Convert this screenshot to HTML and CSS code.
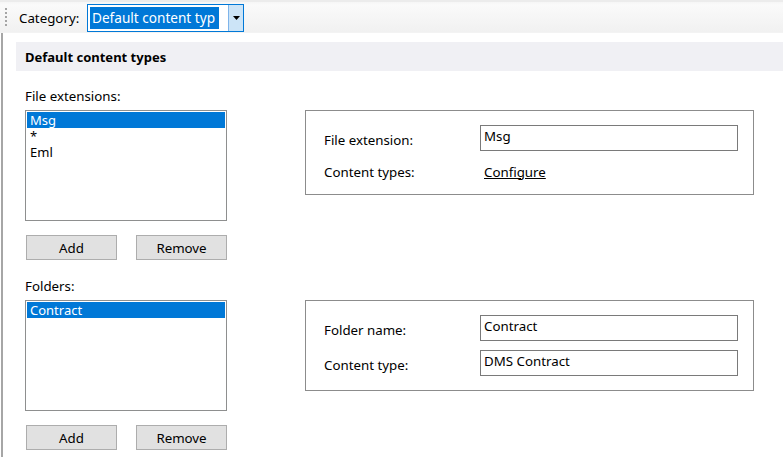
FILE: index.html
```html
<!DOCTYPE html>
<html>
<head>
<meta charset="utf-8">
<link rel="stylesheet" href="styles.css">
</head>
<body>
<div class="app">
  <div class="toolbar">
    <span class="grip"></span>
    <span class="cat-label">Category:</span>
    <div class="combo">
      <span class="combo-text"><span class="combo-sel">Default content typ</span></span>
      <span class="combo-btn"><svg width="7" height="4" viewBox="0 0 7 4"><path d="M0 0H7L3.5 4Z" fill="#000"/></svg></span>
    </div>
  </div>
  <div class="content">
    <div class="section-head">Default content types</div>
    <div class="group first">
      <div class="group-label">File extensions:</div>
      <div class="group-row">
        <div class="left-col">
          <div class="listbox">
            <div class="item selected">Msg</div>
            <div class="item">*</div>
            <div class="item">Eml</div>
          </div>
          <div class="buttons">
            <button class="btn">Add</button>
            <button class="btn">Remove</button>
          </div>
        </div>
        <div class="panel panel-ext">
          <div class="field">
            <span class="field-label">File extension:</span>
            <div class="input">Msg</div>
          </div>
          <div class="field">
            <span class="field-label">Content types:</span>
            <a class="link">Configure</a>
          </div>
        </div>
      </div>
    </div>
    <div class="group">
      <div class="group-label">Folders:</div>
      <div class="group-row">
        <div class="left-col">
          <div class="listbox">
            <div class="item selected">Contract</div>
          </div>
          <div class="buttons">
            <button class="btn">Add</button>
            <button class="btn">Remove</button>
          </div>
        </div>
        <div class="panel panel-folder">
          <div class="field">
            <span class="field-label">Folder name:</span>
            <div class="input">Contract</div>
          </div>
          <div class="field">
            <span class="field-label">Content type:</span>
            <div class="input">DMS Contract</div>
          </div>
        </div>
      </div>
    </div>
  </div>
</div>
</body>
</html>
```

FILE: styles.css
```css
* { box-sizing: border-box; }
html, body {
  margin: 0;
  padding: 0;
  background: #fff;
  width: 783px;
  height: 457px;
  overflow: hidden;
}
body {
  font-family: "Segoe UI", "Noto Sans", "Open Sans", sans-serif;
  font-size: 13.3px;
  color: #1a1a1a;
}
.app {
  display: flex;
  flex-direction: column;
  height: 457px;
}
.toolbar {
  height: 33px;
  display: flex;
  align-items: center;
  background: linear-gradient(#f6f6f6 0, #fafafa 3px, #f1f1f1 100%);
  border-top: 2px solid #ececec;
  border-bottom: 1px solid #f3f3f3;
  padding-left: 5px;
  padding-top: 1px;
}
.grip {
  width: 2px;
  height: 20px;
  background: repeating-linear-gradient(to bottom, #a5a5a5 0, #a5a5a5 2px, transparent 2px, transparent 4px);
  margin-right: 11px;
}
.cat-label {
  font-size: 13.3px;
  color: #000;
  width: 69px;
  padding-left: 1px;
}
.combo {
  display: flex;
  width: 157px;
  height: 28px;
  border: 1px solid #0078d7;
  background: #fff;
}
.combo-text {
  flex: 1;
  padding: 2px 0 2px 2px;
  display: flex;
  overflow: hidden;
}
.combo-sel {
  display: block;
  background: #0078d7;
  color: #fff;
  font-size: 13.6px;
  line-height: 22px;
  padding-left: 2px;
  width: 129px;
  white-space: nowrap;
  overflow: hidden;
}
.combo-btn {
  width: 15px;
  background: #cce4f7;
  border-left: 1px solid #7eb4ea;
  display: flex;
  align-items: center;
  justify-content: center;
}
.content {
  flex: 1;
  border-left: 2px solid #a6a6a6;
  margin-left: 1px;
  padding-left: 13px;
  padding-top: 9px;
}
.section-head {
  height: 29px;
  background: #f0f0f4;
  font-weight: bold;
  font-size: 13px;
  color: #000;
  padding-left: 9px;
  display: flex;
  align-items: center;
}
.group {
  padding-left: 9px;
  margin-top: 18px;
}
.group.first { margin-top: 17px; }
.group-label {
  line-height: 16px;
  color: #000;
  margin-bottom: 6px;
}
.group-row {
  display: flex;
  gap: 78px;
  align-items: flex-start;
}
.left-col {
  width: 202px;
  display: flex;
  flex-direction: column;
  gap: 14px;
}
.listbox {
  height: 111px;
  border: 1px solid #8e8f8f;
  padding: 1px;
  background: #fff;
}
.listbox .item {
  height: 16px;
  line-height: 16px;
  font-size: 13px;
  padding-left: 3px;
  color: #000;
  overflow: hidden;
}
.listbox .item.selected {
  background: #0078d7;
  color: #fff;
}
.buttons {
  display: flex;
  justify-content: space-between;
  padding-left: 1px;
}
.btn {
  width: 91px;
  height: 25px;
  background: #e1e1e1;
  border: 1px solid #adadad;
  font: inherit;
  color: #000;
  padding: 0;
}
.panel {
  width: 449px;
  border: 1px solid #8c8c8c;
  padding: 14px 15px 0 18px;
  display: flex;
  flex-direction: column;
}
.panel-ext { height: 85px; gap: 6px; }
.panel-folder { height: 91px; gap: 9px; }
.field {
  display: flex;
  align-items: center;
  height: 26px;
}
.field-label {
  width: 156px;
  padding-top: 3px;
  color: #000;
}
.input {
  flex: 1;
  height: 26px;
  border: 1px solid #7a7a7a;
  padding: 2px 3px;
  line-height: 16px;
  color: #000;
}
.link {
  color: #000;
  text-decoration: underline;
  padding-left: 4px;
  padding-top: 3px;
}
```
